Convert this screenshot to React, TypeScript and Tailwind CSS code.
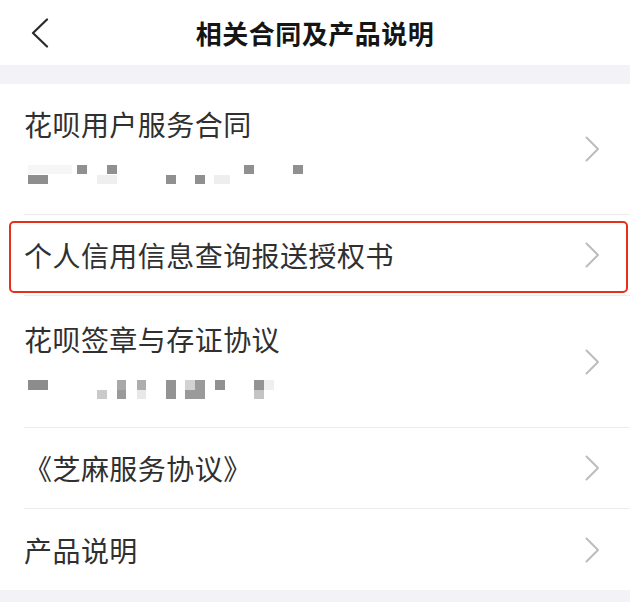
import React from "react";

const FONT = { fontFamily: '"Noto Sans CJK SC", "Noto Sans", sans-serif' };

type Block = { x: number; y: number; w: number; h: number; c: string };

const MOSAIC_ONE: Block[] = [
  { x: 4, y: 0, w: 44, h: 9, c: "#f6f6f6" },
  { x: 73, y: 10, w: 20, h: 9, c: "#efefef" },
  { x: 190, y: 10, w: 16, h: 9, c: "#eeeeee" },
  { x: 4, y: 10, w: 20, h: 9, c: "#8e8e8e" },
  { x: 53, y: 0, w: 10, h: 9, c: "#909090" },
  { x: 83, y: 0, w: 10, h: 9, c: "#909090" },
  { x: 142, y: 10, w: 10, h: 9, c: "#909090" },
  { x: 171, y: 10, w: 10, h: 9, c: "#909090" },
  { x: 220, y: 0, w: 10, h: 9, c: "#909090" },
  { x: 269, y: 0, w: 10, h: 9, c: "#909090" }
];

const MOSAIC_TWO: Block[] = [
  { x: 4, y: 0, w: 20, h: 10, c: "#8c8c8c" },
  { x: 73, y: 10, w: 10, h: 9, c: "#cacaca" },
  { x: 93, y: 0, w: 9, h: 10, c: "#a8a8a8" },
  { x: 93, y: 10, w: 9, h: 9, c: "#9a9a9a" },
  { x: 113, y: 0, w: 9, h: 10, c: "#aeaeae" },
  { x: 113, y: 10, w: 9, h: 9, c: "#e8e8e8" },
  { x: 142, y: 0, w: 10, h: 19, c: "#939393" },
  { x: 161, y: 0, w: 10, h: 10, c: "#d2d2d2" },
  { x: 171, y: 0, w: 10, h: 10, c: "#9a9a9a" },
  { x: 161, y: 10, w: 20, h: 9, c: "#9a9a9a" },
  { x: 191, y: 0, w: 10, h: 10, c: "#919191" },
  { x: 230, y: 0, w: 10, h: 10, c: "#939393" },
  { x: 230, y: 10, w: 10, h: 9, c: "#c4c4c4" },
  { x: 240, y: 0, w: 10, h: 10, c: "#efefef" }
];

function Mosaic({ blocks }: { blocks: Block[] }) {
  return (
    <svg className="mt-[23px] block" width="290" height="20" viewBox="0 0 290 20">
      {blocks.map((b, i) => (
        <rect key={i} x={b.x} y={b.y} width={b.w} height={b.h} fill={b.c} />
      ))}
    </svg>
  );
}

function Chevron() {
  return (
    <svg width="15" height="26" viewBox="0 0 15 26" className="shrink-0">
      <polyline
        points="1.5,1.5 13,13 1.5,24.5"
        fill="none"
        stroke="#bdbdbd"
        strokeWidth="2"
        strokeLinecap="round"
        strokeLinejoin="round"
      />
    </svg>
  );
}

type Item = {
  title: string;
  mosaic?: Block[];
  height: string;
  pad: string;
  highlight?: boolean;
  last?: boolean;
};

const ITEMS: Item[] = [
  { title: "花呗用户服务合同", mosaic: MOSAIC_ONE, height: "h-[131px]", pad: "pt-[22px]" },
  { title: "个人信用信息查询报送授权书", height: "h-[81px]", pad: "", highlight: true },
  { title: "花呗签章与存证协议", mosaic: MOSAIC_TWO, height: "h-[132px]", pad: "pt-[25px]" },
  { title: "《芝麻服务协议》", height: "h-[81px]", pad: "" },
  { title: "产品说明", height: "h-[81px]", pad: "", last: true }
];

export default function App() {
  return (
    <div className="min-h-screen w-[630px] bg-[#f3f3f7]" style={FONT}>
      <header className="relative flex h-[65px] items-center justify-center bg-white">
        <button className="absolute left-[31px] top-[18px]" type="button">
          <svg width="18" height="30" viewBox="0 0 18 30">
            <polyline
              points="16,1.5 2,15 16,28.5"
              fill="none"
              stroke="#2a2a2a"
              strokeWidth="2.2"
              strokeLinecap="round"
              strokeLinejoin="round"
            />
          </svg>
        </button>
        <h1 className="text-[26px] font-bold tracking-[0.5px] text-[#151515]">相关合同及产品说明</h1>
      </header>

      <div className="h-[19px]" />

      <ul className="bg-white">
        {ITEMS.map((item) => (
          <li className="relative pl-[24px]" key={item.title}>
            {item.highlight && (
              <div className="pointer-events-none absolute bottom-[3px] left-[9px] right-[2px] top-[6px] rounded-[5px] border-2 border-[#e5301c]" />
            )}
            <div
              className={`flex items-center justify-between pr-[30px] ${item.height} ${
                item.last ? "" : "border-b border-[#ececec]"
              }`}
            >
              <div className={`flex flex-col self-stretch ${item.mosaic ? item.pad : "justify-center"}`}>
                <span className="text-[28px] leading-[36px] tracking-[0.45px] text-[#303030]">{item.title}</span>
                {item.mosaic && <Mosaic blocks={item.mosaic} />}
              </div>
              <Chevron />
            </div>
          </li>
        ))}
      </ul>
    </div>
  );
}
